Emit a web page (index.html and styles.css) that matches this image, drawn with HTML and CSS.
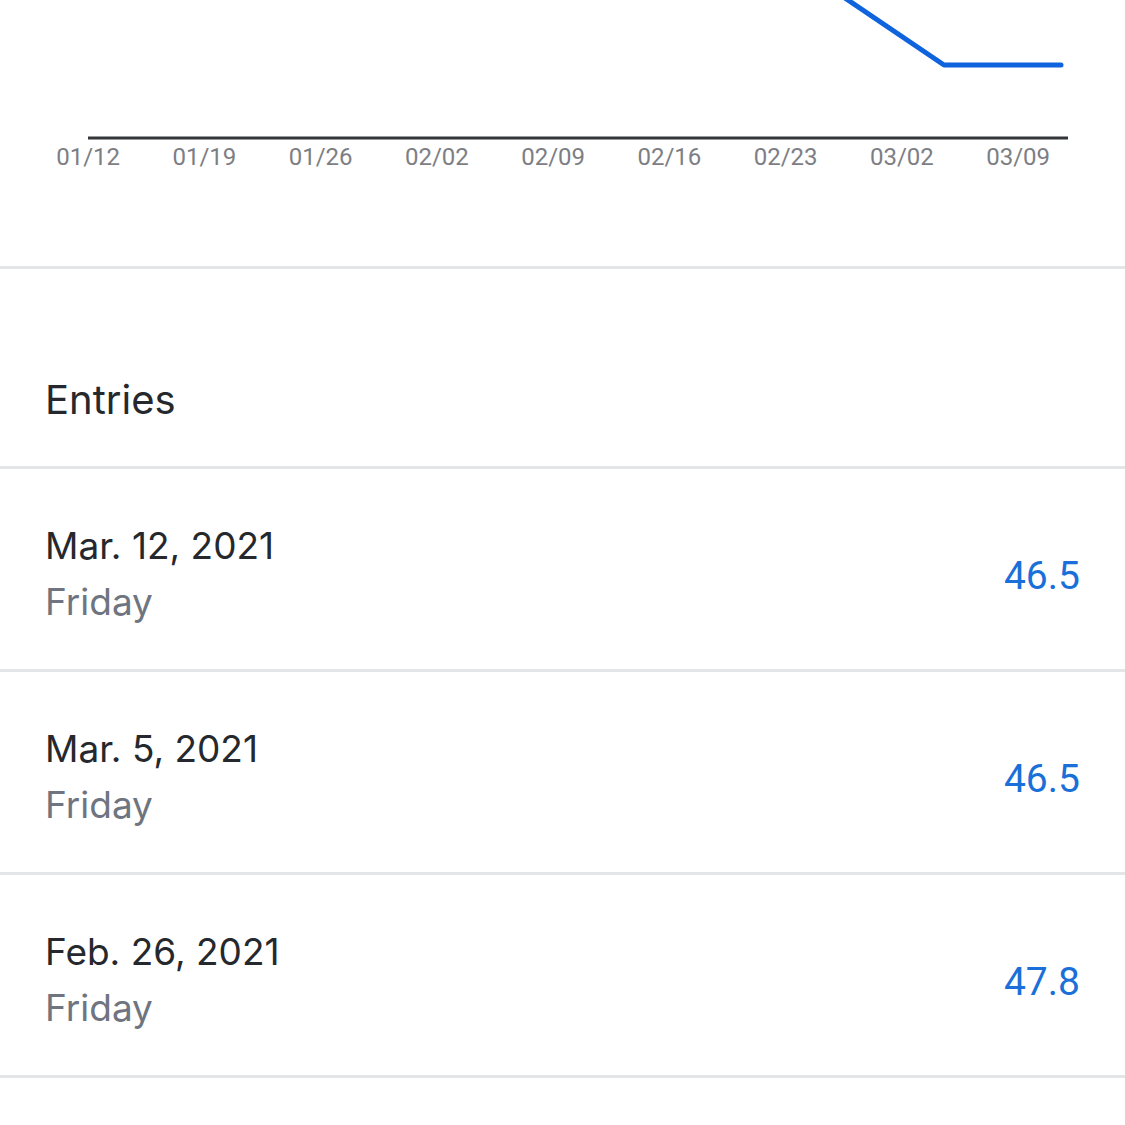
FILE: index.html
```html
<!DOCTYPE html>
<html lang="en">
<head>
    <meta charset="UTF-8">
    <meta name="viewport" content="width=device-width, initial-scale=1.0">
    <title>Entries</title>
    <link rel="stylesheet" href="styles.css">
</head>
<body>
    <!-- Chart -->
    <div class="chart">
        <svg class="plot" width="1125" height="140" viewBox="0 0 1125 140">
            <polyline points="842,-4 944,65 1061,65" fill="none" stroke="#0f63dc" stroke-width="5" stroke-linecap="round" stroke-linejoin="round"/>
            <line x1="88" y1="138" x2="1068" y2="138" stroke="#333538" stroke-width="3"/>
        </svg>
        <div class="ticks">
            <span>01/12</span>
            <span>01/19</span>
            <span>01/26</span>
            <span>02/02</span>
            <span>02/09</span>
            <span>02/16</span>
            <span>02/23</span>
            <span>03/02</span>
            <span>03/09</span>
        </div>
    </div>

    <div class="section-title">Entries</div>

    <div class="entries">
        <div class="entry">
            <div class="entry-date">
                <div class="date">Mar. 12, 2021</div>
                <div class="day">Friday</div>
            </div>
            <div class="value">46.5</div>
        </div>
        <div class="entry">
            <div class="entry-date">
                <div class="date">Mar. 5, 2021</div>
                <div class="day">Friday</div>
            </div>
            <div class="value">46.5</div>
        </div>
        <div class="entry">
            <div class="entry-date">
                <div class="date">Feb. 26, 2021</div>
                <div class="day">Friday</div>
            </div>
            <div class="value">47.8</div>
        </div>
    </div>
</body>
</html>
```

FILE: styles.css
```css
body, html {
    margin: 0;
    padding: 0;
    background: #fff;
}

body {
    font-family: Inter, "Noto Sans", sans-serif;
}

/* Grafico */
.chart {
    height: 266px;
    border-bottom: 3px solid #e4e5e7;
}

.plot {
    display: block;
}

.ticks {
    display: flex;
    padding-left: 30px;
    margin-top: 5px;
}

.ticks span {
    width: 116.25px;
    text-align: center;
    font-family: Roboto, sans-serif;
    font-size: 24px;
    line-height: 24px;
    color: #7d7e84;
}

/* Titulo */
.section-title {
    height: 200px;
    box-sizing: border-box;
    padding: 107px 45px 0;
    font-size: 40px;
    line-height: 48px;
    color: #25282d;
    border-bottom: 3px solid #e4e5e7;
}

/* Filas */
.entry {
    display: flex;
    align-items: center;
    justify-content: space-between;
    height: 200px;
    padding: 0 45px;
    border-bottom: 3px solid #e4e5e7;
}

.entry-date {
    padding-top: 10px;
}

.date {
    font-size: 37px;
    line-height: 56px;
    color: #25282d;
}

.day {
    font-size: 37px;
    line-height: 56px;
    color: #6e7480;
}

.value {
    padding-top: 14px;
    font-family: Roboto, sans-serif;
    font-size: 39px;
    color: #1a6fd8;
}
```
